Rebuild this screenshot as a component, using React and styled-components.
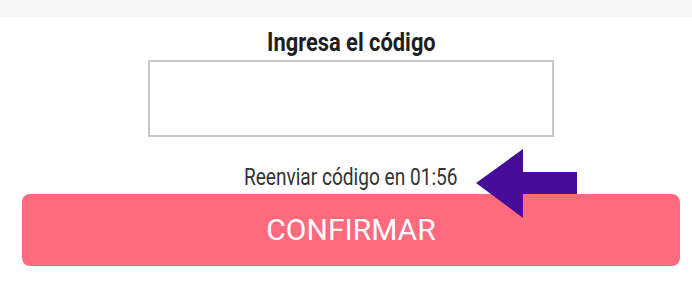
import React from 'react';
import styled, { createGlobalStyle } from 'styled-components';

const GlobalStyle = createGlobalStyle`
  html, body {
    margin: 0;
    padding: 0;
    background: #ffffff;
    font-family: Roboto, "Liberation Sans", sans-serif;
  }
`;

const Page = styled.div`
  position: relative;
  width: 692px;
  height: 281px;
  overflow: hidden;
  background: #ffffff;
`;

const TopBar = styled.div`
  height: 17px;
  background: #f8f8f8;
`;

const Content = styled.div`
  display: flex;
  flex-direction: column;
  align-items: center;
  padding: 10px 12px 0 22px;
`;

const Narrow = styled.span`
  display: inline-block;
  transform: scaleX(${p => p.$scale || 0.82});
  white-space: nowrap;
`;

const Title = styled.div`
  font-size: 26px;
  line-height: 30px;
  font-weight: 700;
  color: #1e1e1e;
  text-align: center;
`;

const CodeInput = styled.input`
  box-sizing: border-box;
  width: 406px;
  height: 77px;
  margin-top: 3px;
  border: 2px solid #c7c7c9;
  border-radius: 0;
  outline: none;
  background: #fff;
  font-size: 24px;
  text-align: center;
`;

const Resend = styled.div`
  margin-top: 28px;
  font-size: 23px;
  line-height: 26px;
  color: #333333;
  text-align: center;
`;

const ConfirmButton = styled.button`
  box-sizing: border-box;
  width: 658px;
  height: 72px;
  margin-top: 3px;
  padding: 0 0 2px;
  border: none;
  border-radius: 8px;
  background: #ff6a7c;
  color: #ffffff;
  font-family: Roboto, "Liberation Sans", sans-serif;
  font-size: 30px;
  font-weight: 400;
  cursor: pointer;
`;

const Pointer = styled.svg`
  position: absolute;
  left: 476px;
  top: 149px;
`;

function App() {
  return (
    <Page>
      <GlobalStyle />
      <TopBar />
      <Content>
        <Title>
          <Narrow $scale={0.84}>Ingresa el código</Narrow>
        </Title>
        <CodeInput type="text" inputMode="numeric" />
        <Resend>
          <Narrow $scale={0.83}>Reenviar código en 01:56</Narrow>
        </Resend>
        <ConfirmButton>CONFIRMAR</ConfirmButton>
      </Content>
      <Pointer width="101" height="69" viewBox="0 0 101 69">
        <polygon points="0,34 47,0 47,23 101,23 101,45 47,45 47,69" fill="#470d99" />
      </Pointer>
    </Page>
  );
}

export default App;
